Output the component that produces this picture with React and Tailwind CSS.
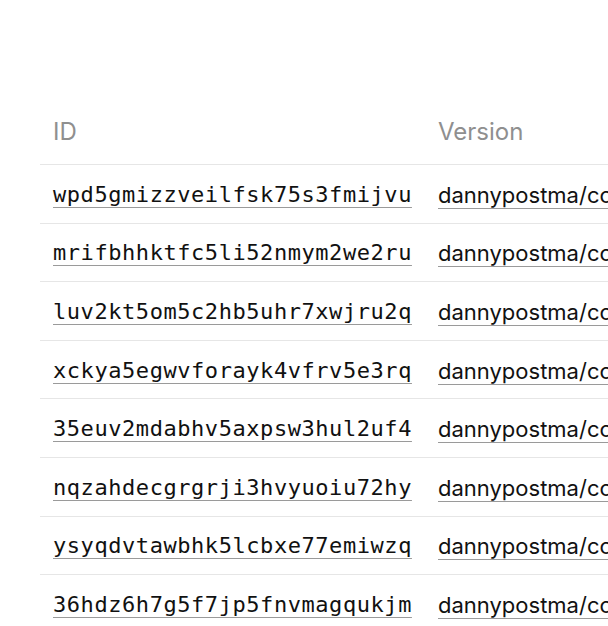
const rows = [
  'wpd5gmizzveilfsk75s3fmijvu',
  'mrifbhhktfc5li52nmym2we2ru',
  'luv2kt5om5c2hb5uhr7xwjru2q',
  'xckya5egwvforayk4vfrv5e3rq',
  '35euv2mdabhv5axpsw3hul2uf4',
  'nqzahdecgrgrji3hvyuoiu72hy',
  'ysyqdvtawbhk5lcbxe77emiwzq',
  '36hdz6h7g5f7jp5fnvmagqukjm',
]

export default function App() {
  return (
    <div className="w-[608px] h-[626px] overflow-hidden bg-white pt-[104px] pl-10">
      <table className="w-[800px] table-fixed border-collapse text-left">
        <thead>
          <tr className="border-b border-[#e6e6e6]">
            <th className="w-[385px] px-[13px] pb-[16px] pt-[12px] font-normal text-[24px] leading-[32px] text-[#8f8f8f] font-['Inter',sans-serif]">
              ID
            </th>
            <th className="px-[13px] pb-[16px] pt-[12px] font-normal text-[24px] leading-[32px] text-[#8f8f8f] font-['Inter',sans-serif]">
              Version
            </th>
          </tr>
        </thead>
        <tbody>
          {rows.map((id) => (
            <tr key={id} className="h-[58.6px] border-b border-[#e6e6e6]">
              <td className="px-[13px] pt-[2px] pb-0 whitespace-nowrap font-['DejaVu_Sans_Mono',monospace] text-[22px] leading-[26px] tracking-[0.56px] text-[#111]">
                <a className="underline decoration-[#9a9a9a] decoration-1 underline-offset-[5px]">
                  {id}
                </a>
              </td>
              <td className="px-[13px] pt-[2px] pb-0 whitespace-nowrap font-['Inter',sans-serif] text-[22px] leading-[26px] text-[#111]">
                <a className="underline decoration-[#9a9a9a] decoration-1 underline-offset-[5px]">
                  dannypostma/controlnet-sdxl
                </a>
              </td>
            </tr>
          ))}
        </tbody>
      </table>
    </div>
  )
}
